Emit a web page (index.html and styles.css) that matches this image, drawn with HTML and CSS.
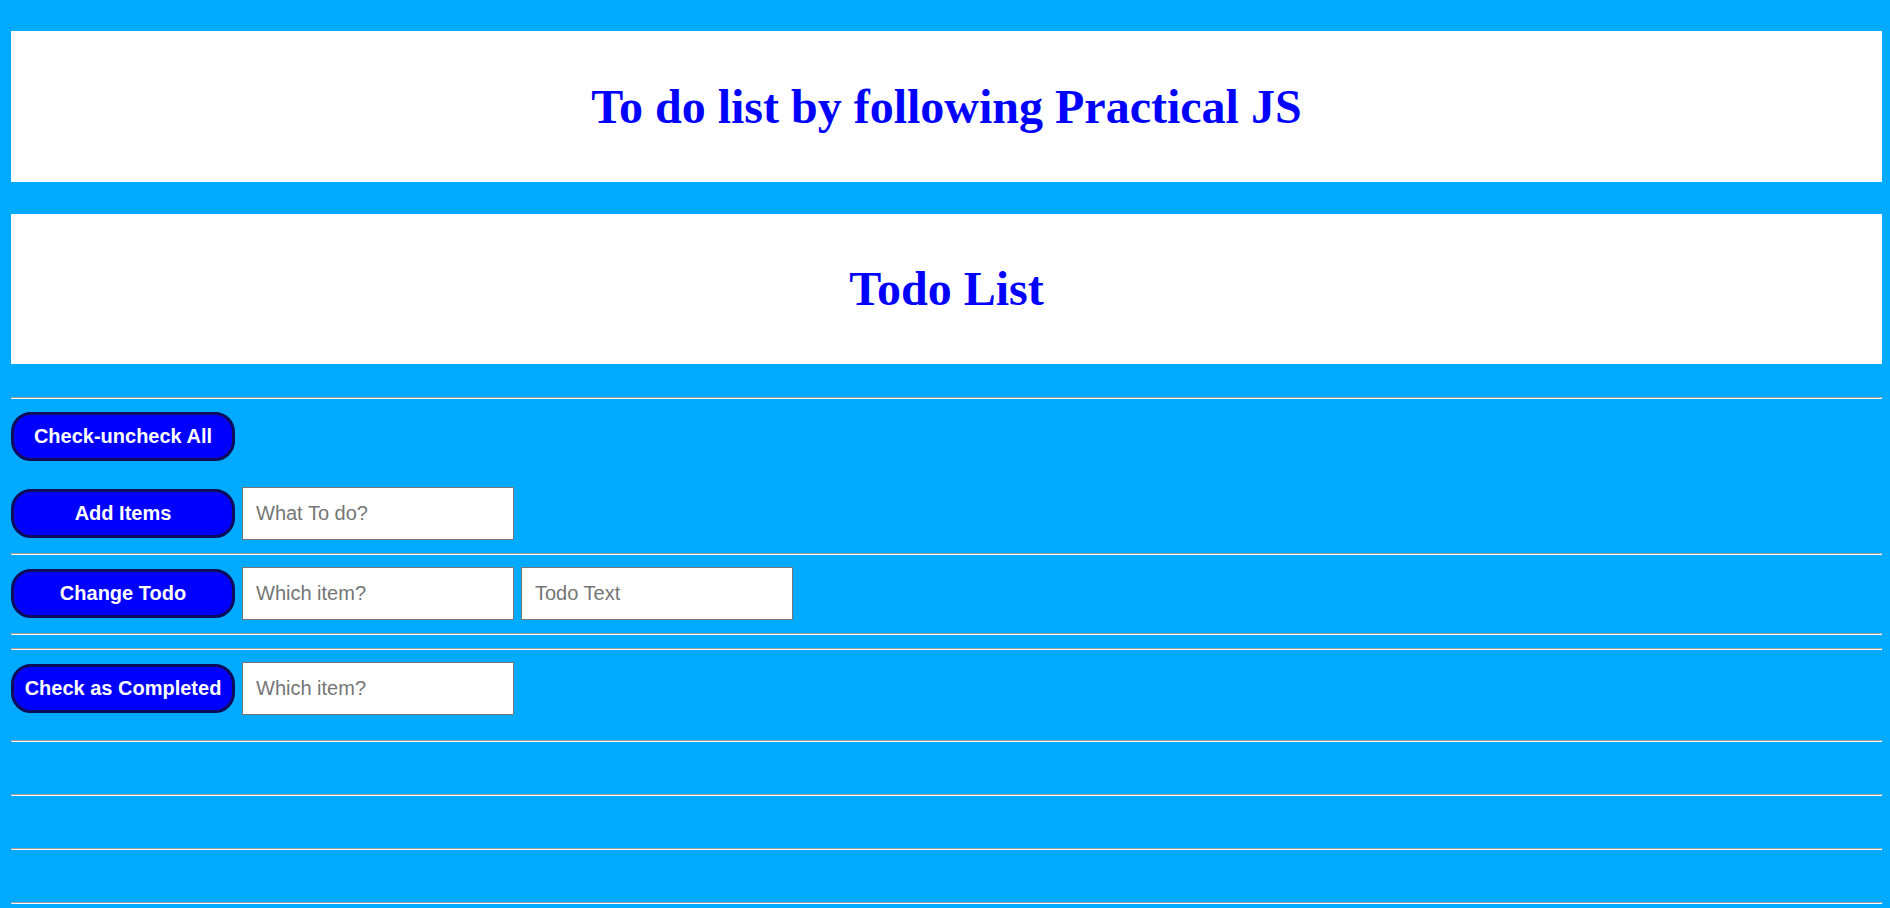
FILE: index.html
```html
<!DOCTYPE html>
<html lang="en">
<head>
<meta charset="utf-8">
<title>Todo List</title>
<link rel="stylesheet" href="styles.css">
</head>
<body>
<main class="page">
  <header class="banner banner--main">
    <h1 class="banner__title">To do list by following Practical JS</h1>
  </header>
  <section class="banner banner--sub">
    <h2 class="banner__title">Todo List</h2>
  </section>
  <hr class="rule rule--top">
  <div class="row row--toggle">
    <button class="btn" type="button">Check-uncheck All</button>
  </div>
  <div class="row row--add">
    <button class="btn" type="button">Add Items</button>
    <input class="field" type="text" placeholder="What To do?">
  </div>
  <hr class="rule rule--tight">
  <div class="row row--after-rule">
    <button class="btn" type="button">Change Todo</button>
    <input class="field" type="text" placeholder="Which item?">
    <input class="field" type="text" placeholder="Todo Text">
  </div>
  <hr class="rule rule--tight">
  <hr class="rule rule--tight">
  <div class="row row--after-rule">
    <button class="btn" type="button">Check as Completed</button>
    <input class="field" type="text" placeholder="Which item?">
  </div>
  <hr class="rule rule--section">
  <hr class="rule rule--wide">
  <hr class="rule rule--wide">
  <hr class="rule rule--wide">
</main>
</body>
</html>
```

FILE: styles.css
```css
html, body {
  margin: 0;
  padding: 0;
  background: #00aaff;
}

body {
  font-family: "Liberation Sans", Arial, sans-serif;
}

.page {
  display: flex;
  flex-direction: column;
  padding: 31px 8px 0 11px;
}

.banner {
  background: #ffffff;
  text-align: center;
}

.banner--main {
  padding: 48px 0;
}

.banner--sub {
  margin-top: 32px;
  padding: 47px 0 48px;
}

.banner__title {
  margin: 0;
  font-family: "Liberation Serif", "Times New Roman", serif;
  font-weight: bold;
  font-size: 48px;
  line-height: 55px;
  color: #0000ff;
}

.rule {
  margin: 0;
  height: 0;
  border-style: solid;
  border-width: 1px;
  border-color: #9a9a9a #ffffff #ffffff #9a9a9a;
}

.rule--top { margin-top: 33px; }
.rule--tight { margin-top: 13px; }
.rule--section { margin-top: 25px; }
.rule--wide { margin-top: 52px; }

.row {
  display: flex;
  align-items: center;
  gap: 7px;
  height: 53px;
}

.row--toggle { margin-top: 11px; }
.row--add { margin-top: 24px; }
.row--after-rule { margin-top: 12px; }

.btn {
  box-sizing: border-box;
  width: 224px;
  height: 49px;
  padding: 0;
  background: #0000ff;
  color: #ffffff;
  border: 3px solid #0c0c5a;
  border-radius: 20px;
  font-family: "Liberation Sans", Arial, sans-serif;
  font-weight: bold;
  font-size: 20px;
  cursor: pointer;
}

.field {
  box-sizing: border-box;
  width: 272px;
  height: 53px;
  margin: 0;
  padding: 0 13px;
  background: #ffffff;
  border: 1px solid #767676;
  border-radius: 0;
  font-family: "Liberation Sans", Arial, sans-serif;
  font-size: 20px;
  color: #000000;
}

.field::placeholder {
  color: #757575;
}
```
